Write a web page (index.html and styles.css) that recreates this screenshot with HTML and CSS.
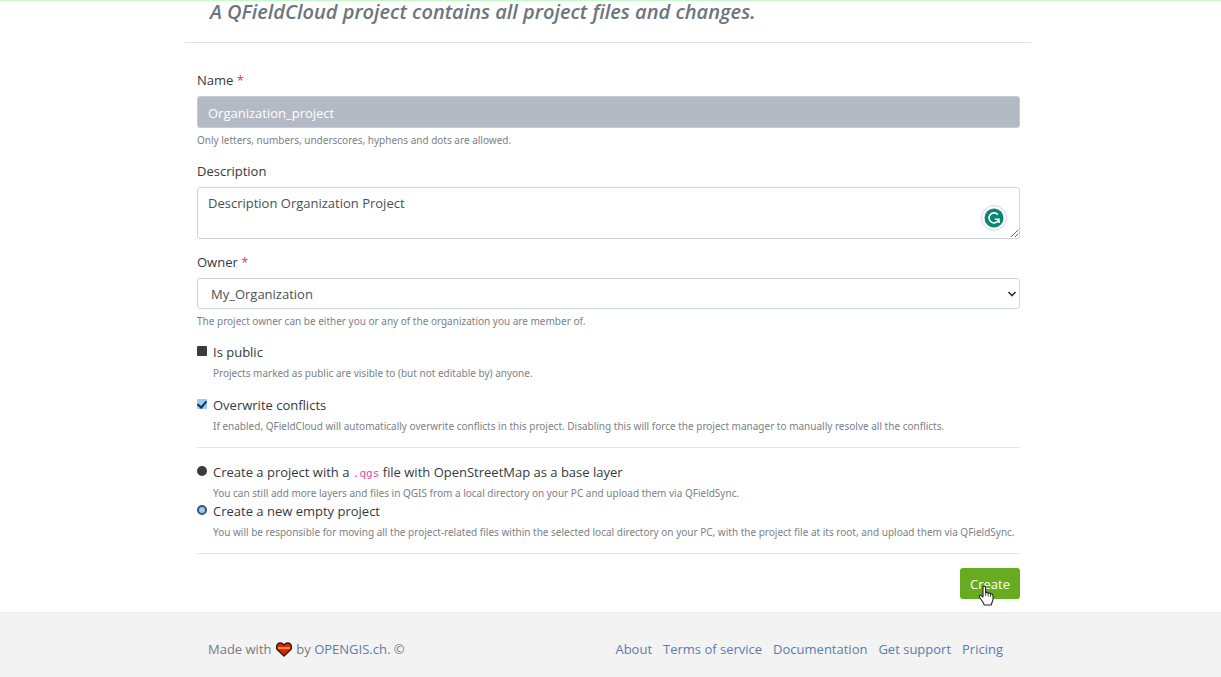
FILE: index.html
```html
<!DOCTYPE html>
<html lang="en">
<head>
<meta charset="utf-8">
<title>Create project - QFieldCloud</title>
<link rel="stylesheet" href="styles.css">
</head>
<body>
<main class="container">
  <header class="intro">
    <h2 class="intro-title">A QFieldCloud project contains all project files and changes.</h2>
  </header>
  <form class="project-form">
    <div class="field">
      <label for="name">Name <span class="required">*</span></label>
      <input class="control control-filled" id="name" type="text" value="Organization_project">
      <small class="help">Only letters, numbers, underscores, hyphens and dots are allowed.</small>
    </div>
    <div class="field">
      <label for="description">Description</label>
      <div class="textarea-wrap">
        <textarea class="control control-area" id="description">Description Organization Project</textarea>
        <svg class="assistant" viewBox="0 0 26 26" aria-hidden="true">
          <circle cx="13" cy="13" r="12.4" fill="#fff" stroke="#e5cfe0" stroke-width="1"/>
          <circle cx="13" cy="13" r="9.5" fill="#08866f"/>
          <path d="M16.8 9.6A5 5 0 1 0 17.8 14.5M13.8 14.2H18V18" fill="none" stroke="#fff" stroke-width="1.6"/>
        </svg>
      </div>
    </div>
    <div class="field">
      <label for="owner">Owner <span class="required">*</span></label>
      <div class="select-wrap">
        <select class="control control-select" id="owner"><option>My_Organization</option></select>
        <svg class="chevron" viewBox="0 0 10 8" aria-hidden="true"><path d="M1.5 2L5 5.5L8.500 2" fill="none" stroke="#333" stroke-width="1.7"/></svg>
      </div>
      <small class="help">The project owner can be either you or any of the organization you are member of.</small>
    </div>
    <div class="choice spaced">
      <input class="mark" type="checkbox" id="public">
      <label for="public">Is public</label>
      <small class="help">Projects marked as public are visible to (but not editable by) anyone.</small>
    </div>
    <div class="choice">
      <input class="mark" type="checkbox" id="overwrite" checked>
      <label for="overwrite">Overwrite conflicts</label>
      <small class="help">If enabled, QFieldCloud will automatically overwrite conflicts in this project. Disabling this will force the project manager to manually resolve all the conflicts.</small>
    </div>
    <hr class="divider">
    <div class="choice">
      <input class="mark round" type="radio" name="kind" id="osm">
      <label for="osm">Create a project with a <code>.qgs</code> file with OpenStreetMap as a base layer</label>
      <small class="help">You can still add more layers and files in QGIS from a local directory on your PC and upload them via QFieldSync.</small>
    </div>
    <div class="choice">
      <input class="mark round" type="radio" name="kind" id="empty" checked>
      <label for="empty">Create a new empty project</label>
      <small class="help">You will be responsible for moving all the project-related files within the selected local directory on your PC, with the project file at its root, and upload them via QFieldSync.</small>
    </div>
    <hr class="divider">
    <div class="actions">
      <button class="create" type="button">Create
        <svg class="pointer" viewBox="0 0 16 21" aria-hidden="true"><path d="M5 12V2.500C5 .6 7.600.6 7.600 2.500V8C8 7 10 7.200 10.200 8.500C10.800 7.600 12.500 8 12.600 9.300C13.500 8.600 15 9.200 15 10.600V14C15 16.500 13.500 17.500 13.200 20H6.200C5.800 17.500 3.500 15.500 1.500 12.300C.6 10.600 2.600 9.700 3.700 10.800Z" fill="#fff" stroke="#222" stroke-width="1.100" stroke-linejoin="round"/><path d="M7.600 8V11M10.200 8.500V11.500M12.600 9.300V12" stroke="#222" stroke-width=".8"/></svg>
      </button>
    </div>
  </form>
</main>
<footer class="footer">
  <div class="footer-inner">
    <p class="credit">Made with
      <svg class="heart" viewBox="0 0 16 15" role="img" aria-label="love"><path d="M8 14L1.200 7.500C-.3 5.500.7 1 4.200 1C6 1 7.300 2 8 3C8.700 2 10 1 11.800 1C15.300 1 16.300 5.500 14.800 7.500Z" fill="#e8200f" stroke="#2a1714" stroke-width="1.300"/><path d="M2 6H14" fill="none" stroke="#f2a52a" stroke-width="1.800"/></svg>
      by <a href="#">OPENGIS.ch.</a> ©</p>
    <nav class="links">
      <a href="#">About</a>
      <a href="#">Terms of service</a>
      <a href="#">Documentation</a>
      <a href="#">Get support</a>
      <a href="#">Pricing</a>
    </nav>
  </div>
</footer>
</body>
</html>
```
FILE: styles.css
```css
* { box-sizing: border-box; }

body {
  margin: 0;
  min-height: 100vh;
  display: flex;
  flex-direction: column;
  border-top: 1px solid #c5fbc9;
  padding-right: 5px;
  background: #fff;
  color: #343a40;
  font: 13px/20px "Open Sans", "Noto Sans", sans-serif;
}

.container,
.footer-inner {
  width: 100%;
  max-width: 846px;
  margin: 0 auto;
}

.intro {
  padding: 0 25px 19px;
  border-bottom: 1px solid #dfe1e3;
}

.intro-title {
  margin: 0;
  color: #6c757d;
  font-size: 20px;
  font-style: italic;
  font-weight: 600;
  line-height: 22px;
}

.project-form { padding: 27px 11px 13px 12px; }

.field { margin-bottom: 13px; }

.field label {
  display: block;
  margin-bottom: 6px;
}

.required { color: #f0323c; }

.control {
  display: block;
  width: 100%;
  height: 32px;
  padding: 5px 10px 4px;
  border: 1px solid #ced4da;
  border-radius: 3px;
  background: #fff;
  color: #495057;
  font: inherit;
}

.control-filled {
  border-color: #c4cdd6;
  background: #b4b9c6;
  color: #fff;
}

.control-area {
  height: 52px;
  resize: vertical;
}

.control-select {
  height: 31px;
  padding-left: 13px;
  appearance: none;
}

.textarea-wrap,
.select-wrap { position: relative; }

.assistant {
  position: absolute;
  top: 18px;
  right: 13px;
  width: 26px;
  height: 26px;
}

.chevron {
  position: absolute;
  top: 12px;
  right: 3px;
  width: 10px;
  height: 8px;
}

.help {
  display: block;
  margin-top: 4px;
  color: #7b8187;
  font: 10px/16px "Noto Sans", sans-serif;
}

.choice {
  display: grid;
  grid-template-columns: 10px 1fr;
  column-gap: 6px;
}

.choice .help {
  grid-column: 2;
  margin-top: 3px;
  white-space: nowrap;
}

.spaced { margin-bottom: 14px; }

.mark {
  width: 10px;
  height: 10px;
  margin: 4px 0 0;
  appearance: none;
  border-radius: 1px;
  background: #3b3b3b;
}

.mark:checked {
  background: #9ccbf7;
  display: grid;
  place-items: center;
}

.mark:checked::after {
  content: "";
  width: 4px;
  height: 7px;
  margin-bottom: 2px;
  border: solid #143555;
  border-width: 0 2px 2px 0;
  transform: rotate(40deg);
}

.round { border-radius: 50%; }

.round:checked { border: 2px solid #33587b; }

.round:checked::after { display: none; }

code {
  color: #e0509b;
  font: 11px/16px "DejaVu Sans Mono", monospace;
}

.divider {
  margin: 13px 0 14px;
  border: 0;
  border-top: 1px solid #e5e5e5;
}

.actions {
  display: flex;
  justify-content: flex-end;
}

.create {
  position: relative;
  height: 31px;
  padding: 0 10px;
  border: 0;
  border-radius: 3px;
  background: #67ab20;
  color: #fff;
  font: inherit;
}

.pointer {
  position: absolute;
  top: 17px;
  left: 18px;
  width: 16px;
  height: 21px;
}

.footer {
  flex: 1;
  margin-right: -5px;
  padding: 26px 5px 17px 0;
  border-top: 1px solid #ececec;
  background: #f3f3f3;
  color: #7a7a7a;
}

.footer-inner {
  display: flex;
  justify-content: space-between;
  padding: 0 28px 0 23px;
}

.footer a {
  color: #5c7cad;
  text-decoration: none;
}

.credit { margin: 0; }

.heart {
  width: 16px;
  height: 15px;
  margin: 0 1px;
  vertical-align: -3px;
}

.links {
  display: flex;
  gap: 11px;
}
```
